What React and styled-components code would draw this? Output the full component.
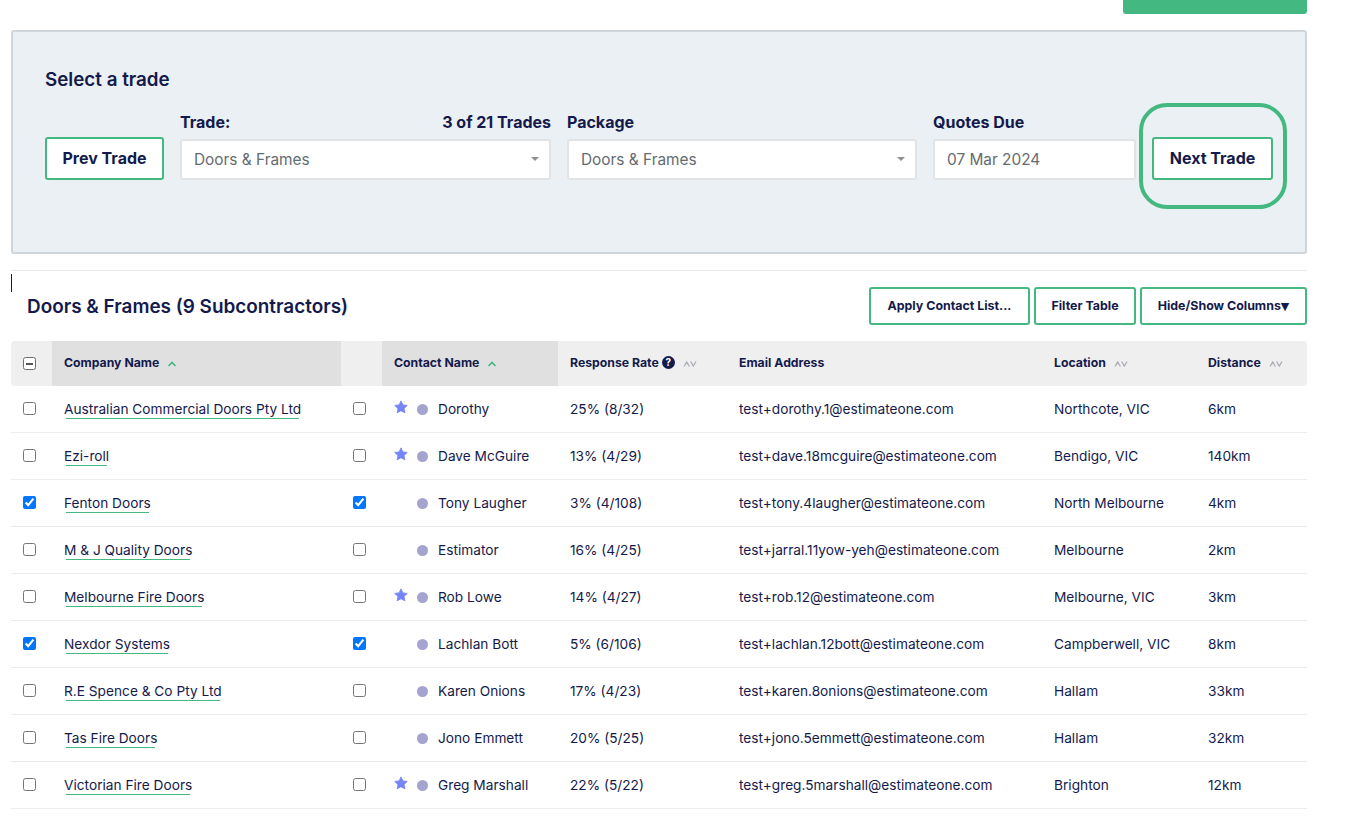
import React from 'react';
import styled, { createGlobalStyle } from 'styled-components';

const navy = '#141a4b';
const green = '#44b881';

const GlobalStyle = createGlobalStyle`
    html, body {
        margin: 0;
        background: #fff;
    }
    body {
        font-family: Inter, "Liberation Sans", sans-serif;
        color: ${navy};
    }
`;

const rows = [
    { company: 'Australian Commercial Doors Pty Ltd', contact: 'Dorothy', starred: true, rate: '25% (8/32)', email: 'test+dorothy.1@estimateone.com', location: 'Northcote, VIC', distance: '6km' },
    { company: 'Ezi-roll', contact: 'Dave McGuire', starred: true, rate: '13% (4/29)', email: 'test+dave.18mcguire@estimateone.com', location: 'Bendigo, VIC', distance: '140km' },
    { company: 'Fenton Doors', contact: 'Tony Laugher', checked: true, rate: '3% (4/108)', email: 'test+tony.4laugher@estimateone.com', location: 'North Melbourne', distance: '4km' },
    { company: 'M & J Quality Doors', contact: 'Estimator', rate: '16% (4/25)', email: 'test+jarral.11yow-yeh@estimateone.com', location: 'Melbourne', distance: '2km' },
    { company: 'Melbourne Fire Doors', contact: 'Rob Lowe', starred: true, rate: '14% (4/27)', email: 'test+rob.12@estimateone.com', location: 'Melbourne, VIC', distance: '3km' },
    { company: 'Nexdor Systems', contact: 'Lachlan Bott', checked: true, rate: '5% (6/106)', email: 'test+lachlan.12bott@estimateone.com', location: 'Campberwell, VIC', distance: '8km' },
    { company: 'R.E Spence & Co Pty Ltd', contact: 'Karen Onions', rate: '17% (4/23)', email: 'test+karen.8onions@estimateone.com', location: 'Hallam', distance: '33km' },
    { company: 'Tas Fire Doors', contact: 'Jono Emmett', rate: '20% (5/25)', email: 'test+jono.5emmett@estimateone.com', location: 'Hallam', distance: '32km' },
    { company: 'Victorian Fire Doors', contact: 'Greg Marshall', starred: true, rate: '22% (5/22)', email: 'test+greg.5marshall@estimateone.com', location: 'Brighton', distance: '12km' },
];

const columnWidths = [41, 289, 41, 176, 169, 315, 154, 111];

const SortedIcon = () => (
    <SortSvg width="10" height="6" viewBox="0 0 10 6">
        <path d="M1.5 5 L5 1.5 L8.5 5" fill="none" stroke={green} strokeWidth="1.6" />
    </SortSvg>
);

const UnsortedIcon = () => (
    <SortSvg width="14" height="6" viewBox="0 0 14 6">
        <path d="M1 5.5 L3.7 1 L6.4 5.5 M7.6 0.5 L10.3 5 L13 0.5" fill="none" stroke="#aaacb5" strokeWidth="1.3" />
    </SortSvg>
);

const StarIcon = () => (
    <svg width="14" height="14" viewBox="0 0 24 24">
        <path
            d="M12 1.5l3.2 6.9 7.5.9-5.5 5.2 1.4 7.5L12 18.3l-6.6 3.7 1.4-7.5L1.3 9.3l7.5-.9z"
            fill="#7485f6"
            stroke="#7485f6"
            strokeWidth="1.5"
            strokeLinejoin="round"
        />
    </svg>
);

const CaretSelect = ({ value }) => (
    <InputBox>
        {value}
        <Caret />
    </InputBox>
);

const App = () => (
    <Page>
        <GlobalStyle />
        <TopBar>
            <TopButton />
        </TopBar>

        <Panel>
            <PanelTitle>Select a trade</PanelTitle>
            <PanelRow>
                <TradeButton>Prev Trade</TradeButton>
                <Field $width={371}>
                    <FieldLabel>
                        <span>Trade:</span>
                        <span>3 of 21 Trades</span>
                    </FieldLabel>
                    <CaretSelect value="Doors & Frames" />
                </Field>
                <Field $width={350}>
                    <FieldLabel>
                        <span>Package</span>
                    </FieldLabel>
                    <CaretSelect value="Doors & Frames" />
                </Field>
                <Field $width={203}>
                    <FieldLabel>
                        <span>Quotes Due</span>
                    </FieldLabel>
                    <InputBox>07 Mar 2024</InputBox>
                </Field>
                <Highlighted>
                    <TradeButton $wide>Next Trade</TradeButton>
                    <HighlightRing />
                </Highlighted>
            </PanelRow>
        </Panel>

        <Section>
            <TextCursor />
            <SectionHead>
                <SectionTitle>Doors &amp; Frames (9 Subcontractors)</SectionTitle>
                <Actions>
                    <ActionButton $width={161}>Apply Contact List...</ActionButton>
                    <ActionButton $width={102}>Filter Table</ActionButton>
                    <ActionButton $width={167}>Hide/Show Columns<DownMark>▼</DownMark></ActionButton>
                </Actions>
            </SectionHead>

            <Table>
                <colgroup>
                    {columnWidths.map((width, index) => (
                        <col key={index} width={width} />
                    ))}
                </colgroup>
                <thead>
                    <tr>
                        <HeadCell><MixedBox /></HeadCell>
                        <HeadCell $sorted>Company Name<SortedIcon /></HeadCell>
                        <HeadCell />
                        <HeadCell $sorted>Contact Name<SortedIcon /></HeadCell>
                        <HeadCell>Response Rate<HelpBadge>?</HelpBadge><UnsortedIcon /></HeadCell>
                        <HeadCell>Email Address</HeadCell>
                        <HeadCell>Location<UnsortedIcon /></HeadCell>
                        <HeadCell>Distance<UnsortedIcon /></HeadCell>
                    </tr>
                </thead>
                <tbody>
                    {rows.map((row) => (
                        <tr key={row.company}>
                            <Cell><CheckBox type="checkbox" checked={!!row.checked} readOnly /></Cell>
                            <Cell><CompanyLink>{row.company}</CompanyLink></Cell>
                            <Cell><CheckBox type="checkbox" checked={!!row.checked} readOnly /></Cell>
                            <Cell>
                                <ContactWrap>
                                    <StarSlot>{row.starred && <StarIcon />}</StarSlot>
                                    <Dot />
                                    {row.contact}
                                </ContactWrap>
                            </Cell>
                            <Cell>{row.rate}</Cell>
                            <Cell>{row.email}</Cell>
                            <Cell>{row.location}</Cell>
                            <Cell>{row.distance}</Cell>
                        </tr>
                    ))}
                </tbody>
            </Table>
        </Section>
    </Page>
);

const Page = styled.div`
    width: 1296px;
    padding: 0 49px 18px 11px;
`;

const TopBar = styled.div`
    display: flex;
    justify-content: flex-end;
    margin-bottom: 16px;
`;

const TopButton = styled.div`
    width: 184px;
    height: 14px;
    background: ${green};
    border-radius: 0 0 3px 3px;
`;

const Panel = styled.div`
    box-sizing: border-box;
    height: 224px;
    padding: 38px 32px 0;
    background: #ebf0f4;
    border: 2px solid #cfd5d9;
    border-radius: 3px;
`;

const PanelTitle = styled.h2`
    margin: 0 0 23px;
    font-size: 18.8px;
    line-height: 20px;
    font-weight: 600;
`;

const PanelRow = styled.div`
    display: flex;
    align-items: flex-end;
    gap: 16px;
`;

const TradeButton = styled.button`
    box-sizing: border-box;
    width: ${(props) => (props.$wide ? '121px' : '119px')};
    height: 43px;
    margin: 0;
    padding: 0 0 2px;
    background: #fff;
    border: 2px solid ${green};
    border-radius: 3px;
    color: ${navy};
    font-family: inherit;
    font-size: 16px;
    font-weight: 700;
    flex-shrink: 0;
`;

const Field = styled.div`
    width: ${(props) => props.$width}px;
    flex-shrink: 0;
`;

const FieldLabel = styled.div`
    display: flex;
    justify-content: space-between;
    margin-bottom: 8px;
    font-size: 16px;
    line-height: 18px;
    font-weight: 700;
`;

const InputBox = styled.div`
    position: relative;
    box-sizing: border-box;
    height: 41px;
    padding: 0 12px;
    display: flex;
    align-items: center;
    background: #fff;
    border: 2px solid #e1e4e7;
    border-radius: 3px;
    color: #666b70;
    font-size: 15.4px;
`;

const Caret = styled.span`
    position: absolute;
    right: 10px;
    top: 16px;
    width: 0;
    height: 0;
    border-left: 4px solid transparent;
    border-right: 4px solid transparent;
    border-top: 4px solid #8d9196;
`;

const Highlighted = styled.div`
    position: relative;
    display: flex;
`;

const HighlightRing = styled.div`
    position: absolute;
    left: -13px;
    right: -14px;
    top: -34px;
    bottom: -29px;
    border: 4px solid ${green};
    border-radius: 28px;
    pointer-events: none;
`;

const Section = styled.section`
    position: relative;
    margin-top: 16px;
    border-top: 1px solid #ececec;
`;

const TextCursor = styled.div`
    position: absolute;
    left: 0;
    top: 3px;
    width: 1px;
    height: 18px;
    background: ${navy};
`;

const SectionHead = styled.div`
    display: flex;
    align-items: center;
    justify-content: space-between;
    padding: 16px 0 16px 16px;
`;

const SectionTitle = styled.h3`
    margin: 0;
    font-size: 18.9px;
    font-weight: 600;
`;

const Actions = styled.div`
    display: flex;
    gap: 4px;
`;

const ActionButton = styled.button`
    box-sizing: border-box;
    width: ${(props) => props.$width}px;
    height: 38px;
    margin: 0;
    padding: 0 0 2px;
    background: #fff;
    border: 2px solid ${green};
    border-radius: 3px;
    color: ${navy};
    font-family: inherit;
    font-size: 12.4px;
    font-weight: 700;
    white-space: nowrap;
`;

const DownMark = styled.span`
    font-family: "DejaVu Sans", sans-serif;
    font-size: 11px;
`;

const Table = styled.table`
    width: 1296px;
    table-layout: fixed;
    border-collapse: separate;
    border-spacing: 0;
    font-size: 13.7px;
`;

const HeadCell = styled.th`
    height: 45px;
    padding: 0 0 2px 12px;
    box-sizing: border-box;
    background: ${(props) => (props.$sorted ? '#e0e0e0' : '#efefef')};
    font-size: 12.25px;
    font-weight: 700;
    text-align: left;
    white-space: nowrap;

    &:first-child {
        border-radius: 4px 0 0 4px;
    }
    &:last-child {
        border-radius: 0 4px 4px 0;
    }
`;

const Cell = styled.td`
    height: 47px;
    box-sizing: border-box;
    padding: 0 0 0 12px;
    border-bottom: 1px solid #ececec;
    text-align: left;
    white-space: nowrap;
    font-weight: 400;
`;

const SortSvg = styled.svg`
    margin-left: 8px;
    vertical-align: 0;
`;

const HelpBadge = styled.span`
    display: inline-flex;
    align-items: center;
    justify-content: center;
    width: 13px;
    height: 13px;
    margin-left: 3px;
    border-radius: 50%;
    background: ${navy};
    color: #fff;
    font-size: 10px;
    font-weight: 700;
    vertical-align: 1px;
`;

const MixedBox = styled.span`
    display: inline-flex;
    align-items: center;
    justify-content: center;
    box-sizing: border-box;
    width: 13px;
    height: 13px;
    background: #fff;
    border: 1px solid #6e6e6e;
    border-radius: 2.5px;
    vertical-align: middle;

    &::after {
        content: '';
        width: 7px;
        height: 2px;
        background: #555;
    }
`;

const CheckBox = styled.input`
    display: block;
    width: 13px;
    height: 13px;
    margin: 0 0 2px;
`;

const CompanyLink = styled.span`
    display: inline-block;
    padding-bottom: 2px;
    margin-bottom: -2px;
    background: linear-gradient(${green}, ${green}) no-repeat center bottom / calc(100% - 4px) 1px;
`;

const ContactWrap = styled.div`
    display: flex;
    align-items: center;
`;

const StarSlot = styled.span`
    display: flex;
    width: 14px;
    height: 14px;
    margin-right: 9px;
    margin-top: -4px;
`;

const Dot = styled.span`
    width: 11px;
    height: 11px;
    margin-right: 10px;
    border-radius: 50%;
    background: #a5a3cf;
`;

export default App;
